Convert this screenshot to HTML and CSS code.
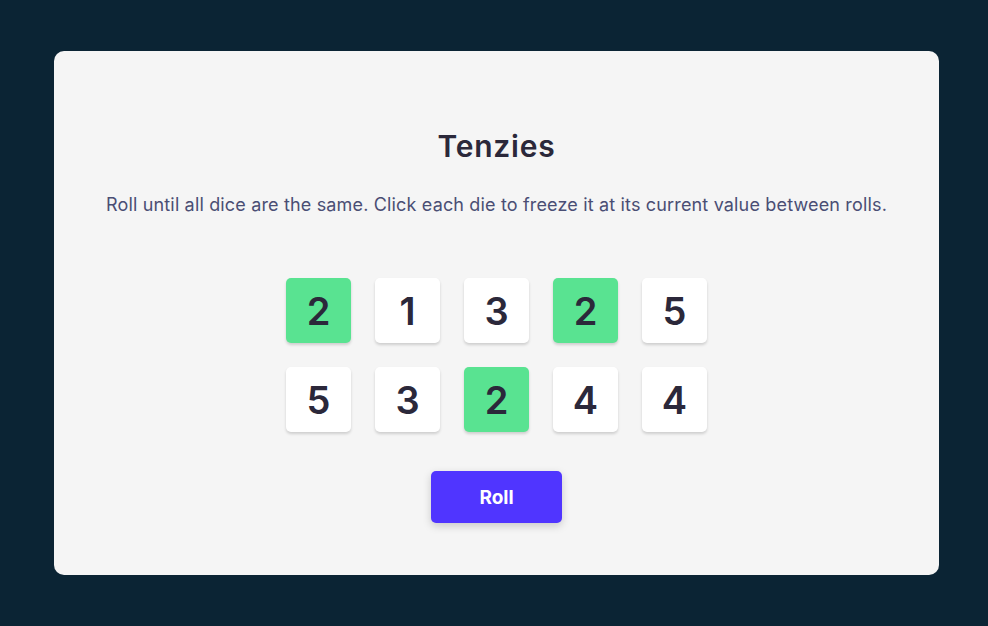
FILE: index.html
```html
<!DOCTYPE html>
<html lang="en">
<head>
<meta charset="utf-8">
<title>Tenzies</title>
<link rel="stylesheet" href="styles.css">
</head>
<body>
<main class="card">
  <h1 class="title">Tenzies</h1>
  <p class="instructions">Roll until all dice are the same. Click each die to freeze it at its current value between rolls.</p>
  <div class="dice">
    <button class="die held">2</button>
    <button class="die">1</button>
    <button class="die">3</button>
    <button class="die held">2</button>
    <button class="die">5</button>
    <button class="die">5</button>
    <button class="die">3</button>
    <button class="die held">2</button>
    <button class="die">4</button>
    <button class="die">4</button>
  </div>
  <button class="roll">Roll</button>
</main>
</body>
</html>
```
FILE: styles.css
```css
html, body {
  margin: 0;
  height: 100%;
}
body {
  background: #0B2434;
  padding: 51px 49px 51px 54px;
  box-sizing: border-box;
  display: flex;
  font-family: "Inter", "Noto Sans", sans-serif;
}
.card {
  flex: 1;
  background: #F5F5F5;
  border-radius: 10px;
  display: flex;
  flex-direction: column;
  align-items: center;
  padding-top: 77px;
  box-sizing: border-box;
}
.title {
  margin: 0;
  font-size: 30px;
  line-height: 36px;
  font-weight: 600;
  letter-spacing: 0.8px;
  color: #2B283A;
}
.instructions {
  margin: 29px 0 0;
  font-size: 18px;
  line-height: 24px;
  letter-spacing: 0.16px;
  color: #4A4E74;
  text-align: center;
  white-space: nowrap;
}
.dice {
  margin-top: 61px;
  display: grid;
  grid-template-columns: repeat(5, 65px);
  grid-auto-rows: 65px;
  gap: 24px;
}
.die {
  border: none;
  padding: 0;
  border-radius: 5px;
  background: #FFFFFF;
  box-shadow: 0 2px 3px rgba(0, 0, 0, 0.16);
  font-family: "Inter", "Noto Sans", sans-serif;
  font-size: 38px;
  font-weight: 600;
  color: #2B283A;
  display: flex;
  align-items: center;
  justify-content: center;
}
.die.held {
  background: #59E391;
}
.roll {
  margin-top: 39px;
  width: 131px;
  height: 52px;
  border: none;
  border-radius: 5px;
  background: #5035FF;
  color: #FFFFFF;
  font-family: "Inter", "Noto Sans", sans-serif;
  font-size: 19px;
  font-weight: 700;
  box-shadow: 0 3px 8px rgba(0, 0, 0, 0.18);
}
```
